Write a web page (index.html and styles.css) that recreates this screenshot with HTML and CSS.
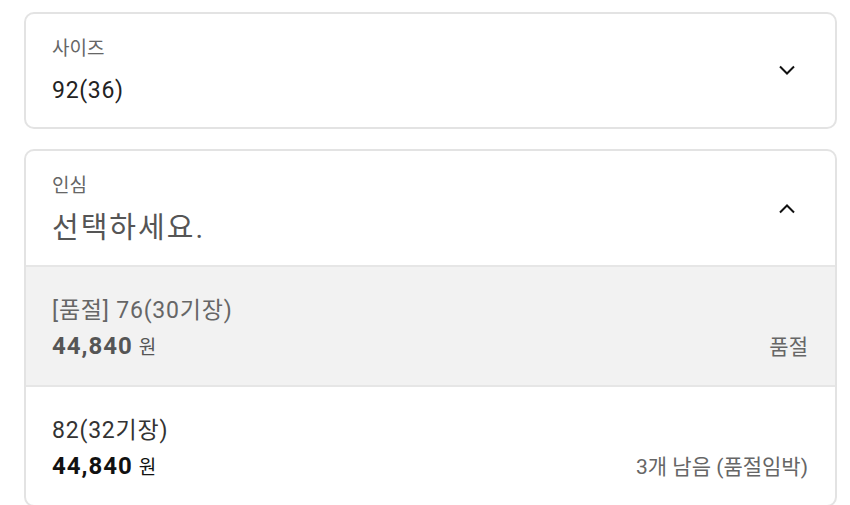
FILE: index.html
```html
<!DOCTYPE html>
<html lang="ko">
<head>
<meta charset="utf-8">
<link rel="stylesheet" href="styles.css">
</head>
<body>
<div class="page">
  <div class="select">
    <div class="head">
      <div class="head-text">
        <div class="label">사이즈</div>
        <div class="value">92(36)</div>
      </div>
      <svg class="chev down" width="16" height="10" viewBox="0 0 16 10"><path d="M1 1.5 L8 8.5 L15 1.5" fill="none" stroke="#111" stroke-width="2"/></svg>
    </div>
  </div>
  <div class="select open">
    <div class="head">
      <div class="head-text">
        <div class="label">인심</div>
        <div class="value placeholder">선택하세요.</div>
      </div>
      <svg class="chev up" width="16" height="10" viewBox="0 0 16 10"><path d="M1 8.5 L8 1.5 L15 8.5" fill="none" stroke="#111" stroke-width="2"/></svg>
    </div>
    <div class="option soldout">
      <div class="name">[품절] 76(30기장)</div>
      <div class="bottom">
        <div class="price"><b>44,840</b><span class="won">원</span></div>
        <div class="status">품절</div>
      </div>
    </div>
    <div class="option">
      <div class="name">82(32기장)</div>
      <div class="bottom">
        <div class="price"><b>44,840</b><span class="won">원</span></div>
        <div class="status">3개 남음 (품절임박)</div>
      </div>
    </div>
  </div>
</div>
</body>
</html>
```
FILE: styles.css
```css
* { box-sizing: border-box; }
body {
  margin: 0;
  background: #fff;
  font-family: Roboto, "Noto Sans CJK KR", sans-serif;
  color: #222;
}
.page {
  padding: 12px 13px 0 24px;
  display: flex;
  flex-direction: column;
  gap: 20px;
}
.select {
  border: 2px solid #e3e3e3;
  border-radius: 10px;
  overflow: hidden;
}
.head {
  display: flex;
  align-items: center;
  padding: 24px 40px 21px 26px;
}
.open .head { padding-bottom: 22px; }
.head-text { flex: 1; display: flex; flex-direction: column; }
.label {
  font-size: 19px;
  line-height: 22px;
  color: #666;
}
.value {
  margin-top: 16px;
  font-size: 23px;
  line-height: 30px;
  letter-spacing: 0.7px;
  color: #222;
}
.placeholder {
  color: #555;
  font-size: 29px;
  letter-spacing: 2px;
}
.chev { display: block; }
.chev.down { margin-top: -4px; }
.option {
  border-top: 2px solid #e6e6e6;
  padding: 30px 27px 24px 26px;
}
.option.soldout { background: #f2f2f2; }
.name {
  font-size: 23px;
  line-height: 28px;
  letter-spacing: 0.8px;
  color: #333;
}
.soldout .name { color: #666; }
.bottom {
  margin-top: 8px;
  height: 28px;
  display: flex;
  justify-content: space-between;
  align-items: center;
}
.price { line-height: 28px; color: #111; white-space: nowrap; }
.price b { font-size: 24px; font-weight: 700; letter-spacing: 1px; }
.won { font-size: 19px; margin-left: 6px; }
.soldout .price { color: #555; }
.status { font-size: 21px; line-height: 28px; color: #666; }
```
